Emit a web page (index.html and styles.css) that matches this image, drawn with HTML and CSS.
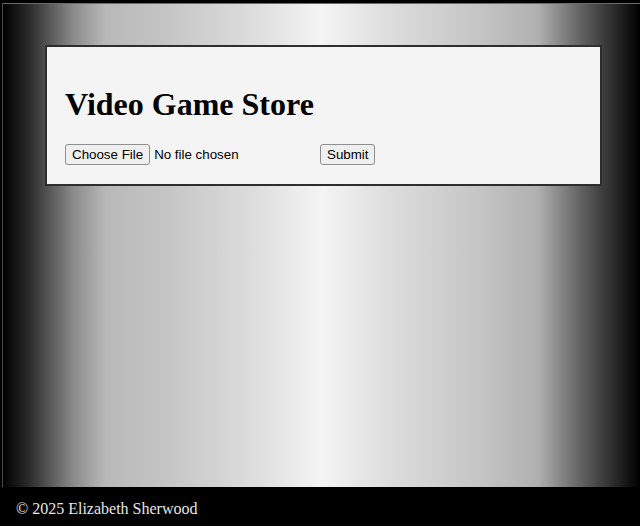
FILE: index.html
```html
<!DOCTYPE html>
<html lang="en">
<head>
<meta charset="utf-8">
<title>Video Game Store</title>
<link rel="stylesheet" href="styles.css">
</head>
<body>
<div class="frame">
  <main class="stage">
    <section class="card">
      <h1 class="title">Video Game Store</h1>
      <form class="upload-form">
        <input class="file-input" type="file" name="file">
        <button class="submit-btn" type="submit">Submit</button>
      </form>
    </section>
  </main>
  <footer class="site-footer">© 2025 Elizabeth Sherwood</footer>
</div>
</body>
</html>
```

FILE: styles.css
```css
html, body {
  margin: 0;
  padding: 0;
  height: 100%;
  background: #000;
}
.frame {
  height: 526px;
  box-sizing: border-box;
  display: flex;
  flex-direction: column;
  border-top: 3px solid #000;
  border-left: 2px solid #000;
}
.stage {
  flex: 1;
  border-top: 1px solid #6a6a6a;
  border-left: 1px solid #4a4a4a;
  background: linear-gradient(to right,
    #000 0%,
    #2a2a2a 4%,
    #8a8a8a 11%,
    #b8b8b8 16%,
    #c4c4c4 25%,
    #dedede 40%,
    #f4f4f4 50%,
    #dedede 60%,
    #c4c4c4 75%,
    #b0b0b0 84%,
    #6a6a6a 90%,
    #2a2a2a 96%,
    #000 100%);
  padding: 41px 38px 0 42px;
}
.card {
  background: #f4f4f4;
  border: 2px solid #2e2e2e;
  padding: 0 20px 19px 18px;
}
.title {
  font-family: "Liberation Serif", "Times New Roman", serif;
  font-size: 32px;
  font-weight: bold;
  margin: 0;
  padding: 39px 0 21px;
  line-height: 37px;
  color: #000;
}
.upload-form {
  display: flex;
  align-items: center;
  font-family: "Liberation Sans", Arial, sans-serif;
  font-size: 13.33px;
}
.file-input {
  font-family: "Liberation Sans", Arial, sans-serif;
  font-size: 13.33px;
  width: 255px;
  color: #000;
}
.file-input::file-selector-button {
  font-family: "Liberation Sans", Arial, sans-serif;
  font-size: 13.33px;
  height: 21px;
  padding: 0 6px;
  margin-right: 4px;
  background: #efefef;
  border: 1px solid #8f8f8f;
  border-radius: 3px;
  color: #000;
}
.submit-btn {
  font-family: "Liberation Sans", Arial, sans-serif;
  font-size: 13.33px;
  height: 21px;
  padding: 0 6px;
  background: #efefef;
  border: 1px solid #8f8f8f;
  border-radius: 3px;
  color: #000;
}
.site-footer {
  height: 39px;
  box-sizing: border-box;
  padding: 13px 0 0 14px;
  background: #000;
  color: #e6e6e6;
  font-family: "Liberation Serif", "Times New Roman", serif;
  font-size: 16px;
}
```
